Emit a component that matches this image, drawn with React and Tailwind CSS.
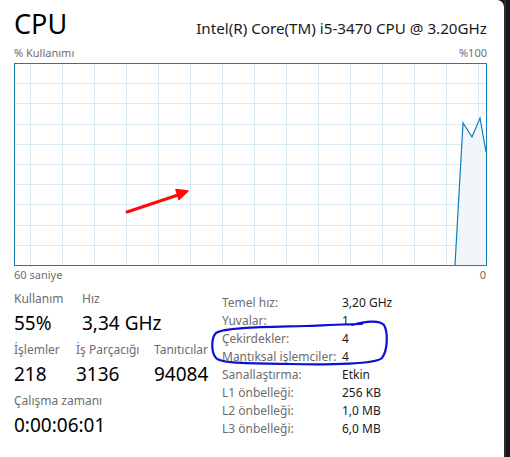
import React from "react";

const font = { fontFamily: '"Noto Sans", "Open Sans", sans-serif' };

function Chart() {
  const vx = [];
  for (let x = 15; x < 471; x += 32) vx.push(x);
  const hy = [];
  for (let k = 1; k < 10; k++) hy.push(Math.round(20.2 * k) - 0.5);
  return (
    <div className="h-[203px] w-[473px] border border-[#117dbb] bg-white">
      <svg width="471" height="201" viewBox="0 0 471 201" className="block">
        {vx.map((x) => (
          <line key={"v" + x} x1={x + 0.5} y1="0" x2={x + 0.5} y2="201" stroke="#d9eaf4" strokeWidth="1" />
        ))}
        {hy.map((y) => (
          <line key={"h" + y} x1="0" y1={y} x2="471" y2={y} stroke="#d9eaf4" strokeWidth="1" />
        ))}
        <polygon points="440,201 448,59 457,73 465,54 471,88 471,201" fill="#f1f6fa" />
        <polyline points="440,201 448,59 457,73 465,54 471,88" fill="none" stroke="#117dbb" strokeWidth="1.2" />
      </svg>
    </div>
  );
}

const rows = [
  ["Temel hız:", "3,20 GHz"],
  ["Yuvalar:", "1"],
  ["Çekirdekler:", "4"],
  ["Mantıksal işlemciler:", "4"],
  ["Sanallaştırma:", "Etkin"],
  ["L1 önbelleği:", "256 KB"],
  ["L2 önbelleği:", "1,0 MB"],
  ["L3 önbelleği:", "6,0 MB"],
];

export default function App() {
  return (
    <div className="relative grid h-[457px] w-[510px] grid-cols-[504px_6px] overflow-hidden bg-[#161616]" style={font}>
      <div className="flex h-[457px] flex-col rounded-tr-[7px] bg-white pl-[14px] text-black">
        {/* header */}
        <div className="flex h-[45px] w-[473px] items-baseline justify-between pt-[10px]">
          <span className="text-[27px] leading-[28px]">CPU</span>
          <span className="text-[15.2px] leading-[20px] text-[#1a1a1a]">Intel(R) Core(TM) i5-3470 CPU @ 3.20GHz</span>
        </div>
        <div className="flex h-[18px] w-[473px] items-start justify-between pt-[1px] text-[11px] leading-[14px] text-[#6d6d6d]">
          <span>% Kullanımı</span>
          <span>%100</span>
        </div>
        <Chart />
        <div className="flex h-[25px] w-[473px] justify-between pt-[2px] text-[11px] leading-[14px] text-[#6d6d6d]">
          <span>60 saniye</span>
          <span className="pr-[1px]">0</span>
        </div>
        {/* stats */}
        <div className="flex">
          <div className="flex w-[208px] flex-col">
            <div className="flex">
              <div className="flex w-[68px] flex-col">
                <span className="text-[12px] leading-[16px] text-[#6d6d6d]">Kullanım</span>
                <span className="mt-[4px] text-[19px] leading-[24px]">55%</span>
              </div>
              <div className="flex flex-col">
                <span className="text-[12px] leading-[16px] text-[#6d6d6d]">Hız</span>
                <span className="mt-[4px] text-[19px] leading-[24px]">3,34 GHz</span>
              </div>
            </div>
            <div className="mt-[7px] flex">
              <div className="flex w-[62px] flex-col">
                <span className="text-[12px] leading-[16px] text-[#6d6d6d]">İşlemler</span>
                <span className="mt-[4px] text-[19px] leading-[24px]">218</span>
              </div>
              <div className="flex w-[78px] flex-col">
                <span className="text-[12px] leading-[16px] text-[#6d6d6d]">İş Parçacığı</span>
                <span className="mt-[4px] text-[19px] leading-[24px]">3136</span>
              </div>
              <div className="flex flex-col">
                <span className="text-[12px] leading-[16px] text-[#6d6d6d]">Tanıtıcılar</span>
                <span className="mt-[4px] text-[19px] leading-[24px]">94084</span>
              </div>
            </div>
            <div className="mt-[7px] flex flex-col">
              <span className="text-[12px] leading-[16px] text-[#6d6d6d]">Çalışma zamanı</span>
              <span className="mt-[4px] text-[19px] leading-[24px]">0:00:06:01</span>
            </div>
          </div>
          <div className="flex flex-col pt-[3px]">
            {rows.map(([k, v]) => (
              <div key={k} className="flex h-[18px] items-center text-[12px] leading-[16px]">
                <span className="w-[120px] text-[#6d6d6d]">{k}</span>
                <span className="text-[#1a1a1a]">{v}</span>
              </div>
            ))}
          </div>
        </div>
      </div>
      <div className="h-[457px] border-l-2 border-[#2b2b2b] bg-[#161616]" />
      {/* annotations */}
      <svg className="pointer-events-none absolute left-0 top-0" width="510" height="457" viewBox="0 0 510 457">
        <line x1="127" y1="212" x2="178" y2="195" stroke="#ff0a0a" strokeWidth="3" strokeLinecap="round" />
        <polygon points="188,191 179,199.5 176,189.5" fill="#ff0a0a" stroke="#ff0a0a" strokeWidth="1.5" strokeLinejoin="round" />
        <path
          d="M 352 325 C 366 321, 380 320, 384 325 C 388 332, 388 350, 382 358 C 376 364, 330 365, 290 364 C 250 363, 222 364, 216 358 C 211 352, 211 338, 216 333 C 224 327, 270 327, 305 326 C 330 325, 350 324, 362 324"
          fill="none"
          stroke="#0a10d6"
          strokeWidth="2.2"
          strokeLinecap="round"
        />
      </svg>
    </div>
  );
}
